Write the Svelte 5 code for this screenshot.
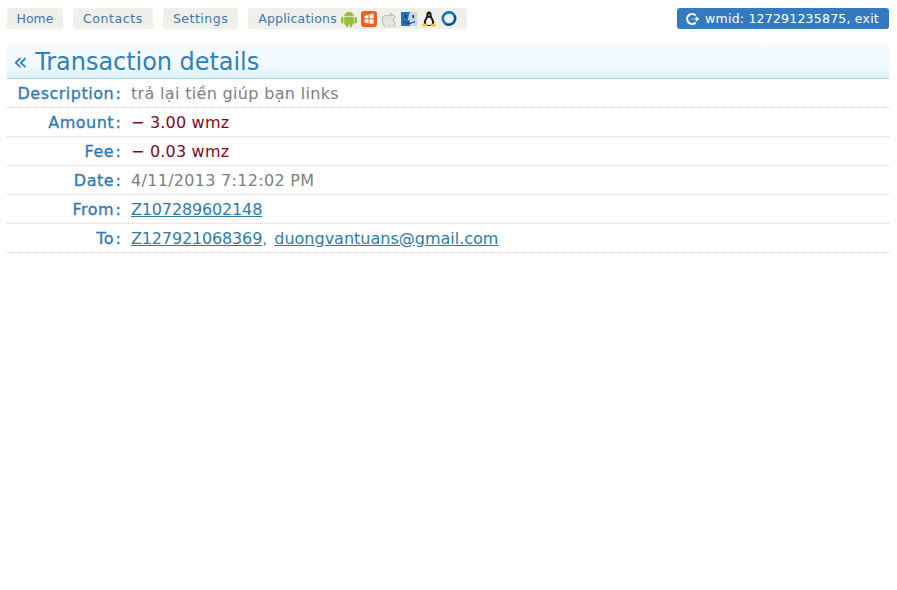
<script lang="ts">
	const links = ['Home', 'Contacts', 'Settings'];
	const rows = [
		{ label: 'Description', text: 'trả lại tiền giúp bạn links', kind: 'desc' },
		{ label: 'Amount', text: '− 3.00 wmz', kind: 'minus' },
		{ label: 'Fee', text: '− 0.03 wmz', kind: 'minus' },
		{ label: 'Date', text: '4/11/2013 7:12:02 PM', kind: 'date' }
	];
</script>

<div class="page">
	<nav class="topbar">
		{#each links as link}
			<a class="navBtn" href="#top">{link}</a>
		{/each}
		<div class="navBtn apps">
			<a href="#top">Applications</a>
			<span class="appIcons">
				<svg viewBox="0 0 16 16" aria-hidden="true">
					<g fill="#97c03d">
						<rect x="0" y="6" width="2.500" height="6.500" rx="1.200" />
						<rect x="13.500" y="6" width="2.500" height="6.500" rx="1.200" />
						<rect x="3.200" y="6" width="9.600" height="7.500" />
						<rect x="4.800" y="12" width="2.500" height="4" rx="1.200" />
						<rect x="8.700" y="12" width="2.500" height="4" rx="1.200" />
						<path d="M3.200 5.300C3.200 2.800 5.500 1 8 1S12.800 2.800 12.800 5.300Z" />
					</g>
				</svg>
				<svg viewBox="0 0 16 16" aria-hidden="true">
					<rect width="16" height="16" rx="3" fill="#ee5f22" />
					<path d="M3.500 5 7.500 3.500V7.600H3.500ZM8.500 3.300 12.500 2.500V7.200L8.500 7.600ZM3.500 8.500H7.500V12.500L3.500 11.500ZM8.500 8.500 12.500 8.200V12.800L8.500 12.600Z" fill="#fff" />
				</svg>
				<svg viewBox="0 0 16 16" aria-hidden="true">
					<path d="M11.800 8.500C11.800 6.900 13 6.200 13.200 6 12.400 4.900 11.200 4.700 10.700 4.700 9.700 4.600 8.800 5.300 8.200 5.300 7.700 5.300 6.900 4.700 6 4.700 4.800 4.700 3.700 5.400 3.100 6.500 1.900 8.600 2.800 11.700 4 13.400 4.600 14.200 5.300 15.200 6.200 15.100 7 15.100 7.400 14.600 8.400 14.600 9.400 14.600 9.700 15.100 10.600 15.100 11.500 15.100 12.100 14.200 12.700 13.400 13.300 12.500 13.600 11.600 13.600 11.500 13.600 11.500 11.800 10.800 11.800 8.500Z" transform="translate(-1.600 -1.400) scale(1.200)" fill="#e6e4e0" stroke="#a8a8a5" stroke-width="0.700" />
					<path d="M10.200 3.600C10.700 3 11 2.200 10.900 1.400 10.200 1.400 9.400 1.900 9 2.400 8.500 3 8.200 3.800 8.300 4.500 9 4.600 9.700 4.200 10.200 3.600Z" fill="#bdbdba" />
				</svg>
				<svg viewBox="0 0 16 16" aria-hidden="true">
					<rect y="1" width="16" height="14" rx="1" fill="#c4d6e8" />
					<path d="M0 2a1 1 0 0 1 1-1h8C7.600 4 7.100 7 7 9.200H8.800V15H1a1 1 0 0 1-1-1Z" fill="#2a6fb5" />
					<rect x="4" y="4" width="1.500" height="3" fill="#10294a" />
					<rect x="11.500" y="4" width="1.500" height="3" fill="#10294a" />
					<path d="M3 10.500C6 12.800 10.500 12.800 14 10.500" fill="none" stroke="#10294a" />
				</svg>
				<svg viewBox="0 0 16 16" aria-hidden="true">
					<path d="M8 .500C5.800.500 5.300 2.500 5.400 4.500 5.500 6 3 8.500 2.800 11.200 2.700 12.800 4 15 8 15S13.300 12.800 13.200 11.200C13 8.500 10.500 6 10.600 4.500 10.700 2.500 10.200.500 8 .500Z" fill="#17170f" />
					<path d="M8 6.500C6.200 7 5 9.500 5 11.500 5 13.300 6.500 14 8 14S11 13.300 11 11.500C11 9.500 9.800 7 8 6.500Z" fill="#fff" />
					<path d="M6.800 3.800 8 3.300 9.200 3.800 8 5.300Z" fill="#f0b92a" />
					<ellipse cx="4" cy="14" rx="2.800" ry="1.600" fill="#f0b92a" />
					<ellipse cx="12" cy="14" rx="2.800" ry="1.600" fill="#f0b92a" />
				</svg>
				<svg viewBox="0 0 16 16" aria-hidden="true">
					<circle cx="8" cy="7.500" r="6.200" fill="#eef5fb" stroke="#1f74bd" stroke-width="2.800" />
					<path d="M13.500 4.500A6.800 6.800 0 0 1 4 13" fill="none" stroke="#0c3f7c" stroke-width="1.400" />
				</svg>
			</span>
		</div>
		<a class="account" href="#top">
			<svg viewBox="0 0 14 14" aria-hidden="true">
				<path d="M10.600 3.400A5 5 0 1 0 10.600 10.600" fill="none" stroke="#fff" stroke-width="2.200" />
				<path d="M6.500 7H11V4.800L14 7 11 9.200V7" fill="#fff" stroke="#fff" stroke-width="0.600" />
			</svg>
			<span>wmid: 127291235875, exit</span>
		</a>
	</nav>

	<h1>« Transaction details</h1>

	<div class="details">
		{#each rows as row}
			<div class="row">
				<div class="label">{row.label}<span class="colon">:</span></div>
				<div class={row.kind}>{row.text}</div>
			</div>
		{/each}
		<div class="row">
			<div class="label">From<span class="colon">:</span></div>
			<div class="plain"><a class="purse" href="#top">Z107289602148</a></div>
		</div>
		<div class="row">
			<div class="label">To<span class="colon">:</span></div>
			<div class="plain"><a class="purse" href="#top">Z127921068369</a><span class="comma">,</span><a href="#top">duongvantuans@gmail.com</a></div>
		</div>
	</div>
</div>

<style>
	:global(body) {
		background: #fff;
	}

	.page {
		padding: 8px 8px 0 7px;
		font-family: 'DejaVu Sans', Verdana, sans-serif;
	}

	.topbar {
		display: flex;
		align-items: stretch;
		gap: 10px;
		height: 21px;
	}

	.navBtn {
		display: flex;
		align-items: center;
		padding: 0 10px;
		border-radius: 3px;
		background: #f0efe9;
		color: #3d78b0;
		font-size: 12.500px;
		text-decoration: none;
	}

	.navBtn:nth-child(1) {
		padding: 0 9.500px;
	}

	.navBtn:nth-child(2) {
		letter-spacing: 0.6px;
	}

	.navBtn:nth-child(3) {
		letter-spacing: 0.5px;
	}

	.apps {
		letter-spacing: 0.2px;
	}

	.apps a {
		color: inherit;
		text-decoration: none;
	}

	.appIcons {
		display: flex;
		gap: 4px;
		margin-left: 4px;
	}

	.appIcons svg {
		width: 16px;
		height: 16px;
	}

	.account {
		display: flex;
		align-items: center;
		gap: 6px;
		margin-left: auto;
		padding: 0 10px 0 8px;
		border-radius: 3px;
		background: #337ac0;
		color: #fff;
		font-size: 12.500px;
		letter-spacing: 0.22px;
		text-decoration: none;
	}

	.account svg {
		width: 14px;
		height: 14px;
	}

	h1 {
		height: 33px;
		margin: 15px 0 0;
		padding: 1px 6px 0;
		border-bottom: 1px solid #a9cbe4;
		background: linear-gradient(#f4fbff 0%, #f1faff 60%, #dff1fc 100%);
		color: #2f80bd;
		font-size: 24px;
		font-weight: 400;
		letter-spacing: -0.05px;
		line-height: 35px;
	}

	.row {
		display: grid;
		grid-template-columns: 114px 1fr;
		column-gap: 10px;
		align-items: center;
		height: 28px;
		border-bottom: 1px dotted #d5d5d5;
		font-size: 16px;
	}

	.label {
		color: #337ab7;
		text-align: right;
		letter-spacing: 0.5px;
		-webkit-text-stroke: 0.35px #337ab7;
	}

	.colon {
		margin-left: 1.500px;
		letter-spacing: 0;
	}

	.plain,
	.desc,
	.date {
		color: #808080;
	}

	.desc {
		letter-spacing: 0.33px;
	}

	.date {
		letter-spacing: 0.3px;
	}

	.minus {
		color: #7a0a1e;
		letter-spacing: 0.2px;
	}

	.plain a {
		color: #2e7ba8;
		text-decoration: underline;
	}

	.purse {
		letter-spacing: -0.15px;
	}

	.comma {
		margin-right: 7px;
	}
</style>
